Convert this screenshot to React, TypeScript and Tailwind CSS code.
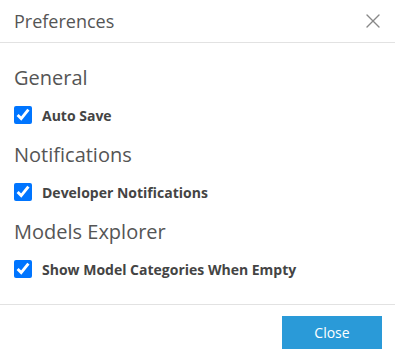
import { X } from "lucide-react";

const sections = [
  { title: "General", items: ["Auto Save"] },
  { title: "Notifications", items: ["Developer Notifications"] },
  { title: "Models Explorer", items: ["Show Model Categories When Empty"] },
];

export default function App() {
  return (
    <div
      className="w-[395px] h-[358px] bg-white flex flex-col"
      style={{ fontFamily: '"Open Sans", "Liberation Sans", sans-serif' }}
    >
      {/* Header */}
      <div className="h-[43px] flex items-center justify-between pl-[14px] pr-[10px] border-b border-[#e2e2e2]">
        <span className="text-[18px] text-[#555]">Preferences</span>
        <button className="text-[#888]">
          <X size={24} strokeWidth={1.4} />
        </button>
      </div>

      {/* Body */}
      <div className="flex-1 px-[14px] pt-[21px] flex flex-col gap-[17px]">
        {sections.map((s) => (
          <div key={s.title} className="flex flex-col gap-[14px]">
            <div className="text-[20px] leading-[28px] text-[#555]">{s.title}</div>
            {s.items.map((item) => (
              <label key={item} className="flex items-center gap-[10px] h-[18px]">
                <input
                  type="checkbox"
                  defaultChecked
                  className="w-[18px] h-[18px] m-0 accent-[#0075ff]"
                />
                <span className="text-[14px] font-bold text-[#444]">{item}</span>
              </label>
            ))}
          </div>
        ))}
      </div>

      {/* Footer */}
      <div className="h-[54px] border-t border-[#e2e2e2] flex items-start justify-end pr-[13px] pt-[11px]">
        <button className="w-[100px] h-[33px] bg-[#2a9ad8] text-white text-[14px]">Close</button>
      </div>
    </div>
  );
}
